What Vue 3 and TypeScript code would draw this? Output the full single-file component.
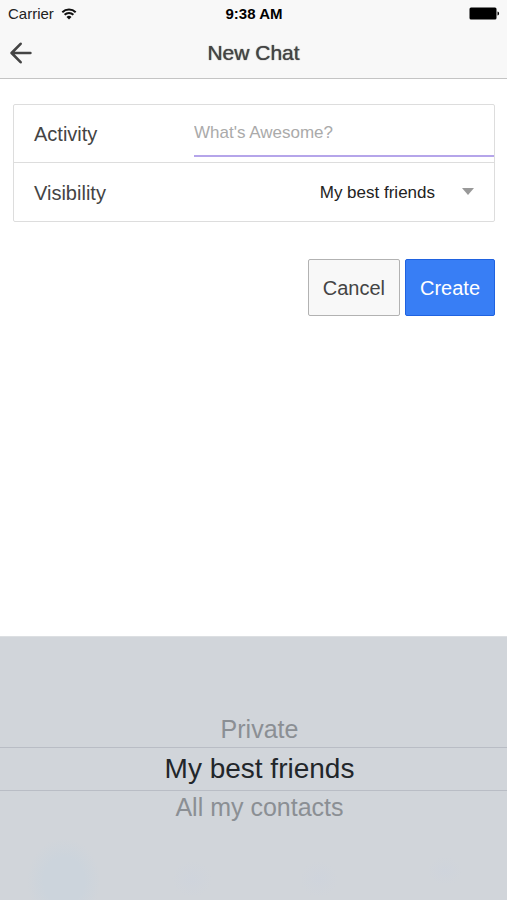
<script setup lang="ts">
import { ref } from 'vue'

const options: string[] = ['Private', 'My best friends', 'All my contacts']
const activity = ref('')
const visibility = ref('My best friends')

function reset(): void {
  activity.value = ''
  visibility.value = 'My best friends'
}
</script>

<template>
  <div class="screen">
    <header class="header">
      <div class="status">
        <div class="carrier">
          <span>Carrier</span>
          <svg class="wifi" viewBox="0 0 16 12" aria-hidden="true">
            <path d="M1.3 4.2a9.6 9.6 0 0 1 13.4 0" />
            <path d="M3.6 6.7a6.3 6.3 0 0 1 8.8 0" />
            <path class="dot" d="M5.5 8.9a3.6 3.6 0 0 1 5 0L8 11.6z" />
          </svg>
        </div>
        <span class="time">9:38 AM</span>
        <svg class="battery" viewBox="0 0 31 13" aria-hidden="true">
          <rect x="0.5" y="0.5" width="27" height="12" rx="1.5" />
          <path d="M28.5 4.5c1 .2 1.6 1 1.6 2s-.6 1.8-1.6 2z" />
        </svg>
      </div>
      <nav class="nav">
        <button class="back" type="button" aria-label="Back">
          <svg viewBox="0 0 22 22" aria-hidden="true">
            <path d="M10.6 1.8 1.6 11l9 9.2M2 11h18.4" />
          </svg>
        </button>
        <h1 class="title">New Chat</h1>
      </nav>
    </header>

    <main class="content">
      <form @submit.prevent>
        <div class="card">
          <div class="row">
            <label class="label" for="activity">Activity</label>
            <input id="activity" v-model="activity" class="field" type="text" placeholder="What's Awesome?" />
          </div>
          <div class="row">
            <label class="label" for="visibility">Visibility</label>
            <div class="select">
              <select id="visibility" v-model="visibility">
                <option v-for="option in options" :key="option">{{ option }}</option>
              </select>
              <svg class="caret" viewBox="0 0 12 7" aria-hidden="true"><path d="M0 0h12L6 7z" /></svg>
            </div>
          </div>
        </div>
        <div class="actions">
          <button class="button" type="button" @click="reset">Cancel</button>
          <button class="button primary" type="submit">Create</button>
        </div>
      </form>
    </main>

    <section class="picker" role="radiogroup" aria-label="Visibility">
      <label v-for="option in options" :key="option" class="option" :class="{ selected: option === visibility }">
        <input v-model="visibility" type="radio" name="picker" :value="option" />
        <span>{{ option }}</span>
      </label>
    </section>
  </div>
</template>

<style>
body {
  background: #fff;
}
</style>

<style scoped>
* {
  box-sizing: border-box;
}

.screen {
  display: flex;
  flex-direction: column;
  min-height: 100vh;
  color: #444;
  font-family: "Liberation Sans", Arial, sans-serif;
}

button,
input,
select {
  margin: 0;
  border-radius: 0;
  font-family: inherit;
}

.header {
  background: #f8f8f8;
  border-bottom: 1px solid #c4c4c4;
}

.status {
  display: grid;
  grid-template-columns: 1fr auto 1fr;
  align-items: center;
  height: 27px;
  padding: 0 7px 0 8px;
  font-size: 15px;
  color: #222;
}

.carrier {
  display: flex;
  align-items: center;
  gap: 7px;
}

.wifi {
  width: 16px;
  height: 12px;
  fill: none;
  stroke: #111;
  stroke-width: 2;
}

.wifi .dot {
  fill: #111;
  stroke: none;
}

.time {
  font-weight: bold;
  color: #000;
}

.battery {
  justify-self: end;
  width: 31px;
  height: 13px;
  fill: #000;
}

.nav {
  display: grid;
  grid-template-columns: 44px 1fr 44px;
  align-items: center;
  height: 51px;
}

.back {
  display: flex;
  align-items: center;
  height: 44px;
  padding: 0 0 0 10px;
  border: 0;
  background: none;
}

.back svg {
  width: 22px;
  height: 22px;
  fill: none;
  stroke: #444;
  stroke-width: 2.6;
  stroke-linecap: round;
  stroke-linejoin: round;
}

.title {
  margin: 0;
  font-size: 21px;
  font-weight: normal;
  text-align: center;
  text-shadow: 0 0 1px #444;
}

.content {
  flex: 1;
  padding: 25px 12px 25px 13px;
}

.card {
  border: 1px solid #ddd;
  border-radius: 2px;
}

.row {
  display: grid;
  grid-template-columns: 180px 1fr;
  height: 57px;
}

.row + .row {
  height: 59px;
  border-top: 1px solid #ddd;
}

.label {
  align-self: center;
  padding: 2px 0 0 20px;
  font-size: 20px;
}

.field {
  width: 100%;
  height: 52px;
  padding: 5px 0 0;
  border: 0;
  border-bottom: 2px solid #b5a5ea;
  background: none;
  color: #444;
  font-size: 17px;
  outline: 0;
}

.field::placeholder {
  color: #aaa;
  opacity: 1;
}

.select {
  display: grid;
  grid-template-columns: 1fr 12px;
  align-items: center;
  padding-right: 20px;
}

.select select {
  grid-area: 1 / 1 / 2 / 3;
  width: 100%;
  height: 57px;
  padding: 1px 39px 0 0;
  border: 0;
  background: none;
  appearance: none;
  color: #222;
  font-size: 17px;
  text-align-last: right;
}

.caret {
  grid-area: 1 / 2;
  width: 12px;
  height: 7px;
  margin-bottom: 2px;
  fill: #999;
  pointer-events: none;
}

.actions {
  display: flex;
  justify-content: flex-end;
  gap: 5px;
  margin-top: 37px;
}

.button {
  height: 57px;
  padding: 2px 14px 0;
  border: 1px solid #b2b2b2;
  border-radius: 2px;
  background: #f8f8f8;
  color: #444;
  font-size: 20px;
}

.primary {
  border-color: #1f62e0;
  background: #387ef5;
  color: #fff;
}

.picker {
  display: flex;
  flex-direction: column;
  justify-content: center;
  height: 264px;
  border-top: 1px solid #dcdfe2;
  background:
    radial-gradient(ellipse at center, #ccd4dc 40%, transparent 72%) 28px 202px / 72px 84px no-repeat,
    radial-gradient(ellipse at center, #cfd4dc, transparent 72%) 172px 224px / 40px 36px no-repeat,
    radial-gradient(ellipse at center, #cfd4dc, transparent 72%) 300px 224px / 38px 36px no-repeat,
    radial-gradient(ellipse at center, #cfd4dc, transparent 72%) 428px 220px / 34px 28px no-repeat,
    #d1d5da;
}

.option {
  display: flex;
  align-items: center;
  justify-content: center;
  height: 34px;
  padding-left: 12px;
  color: #8b8f94;
  font-size: 25px;
}

.option input {
  appearance: none;
  width: 0;
  height: 0;
  margin: 0;
}

.selected {
  height: 44px;
  border: solid #b9bdc5;
  border-width: 1px 0;
  color: #22262a;
  font-size: 28px;
}
</style>
